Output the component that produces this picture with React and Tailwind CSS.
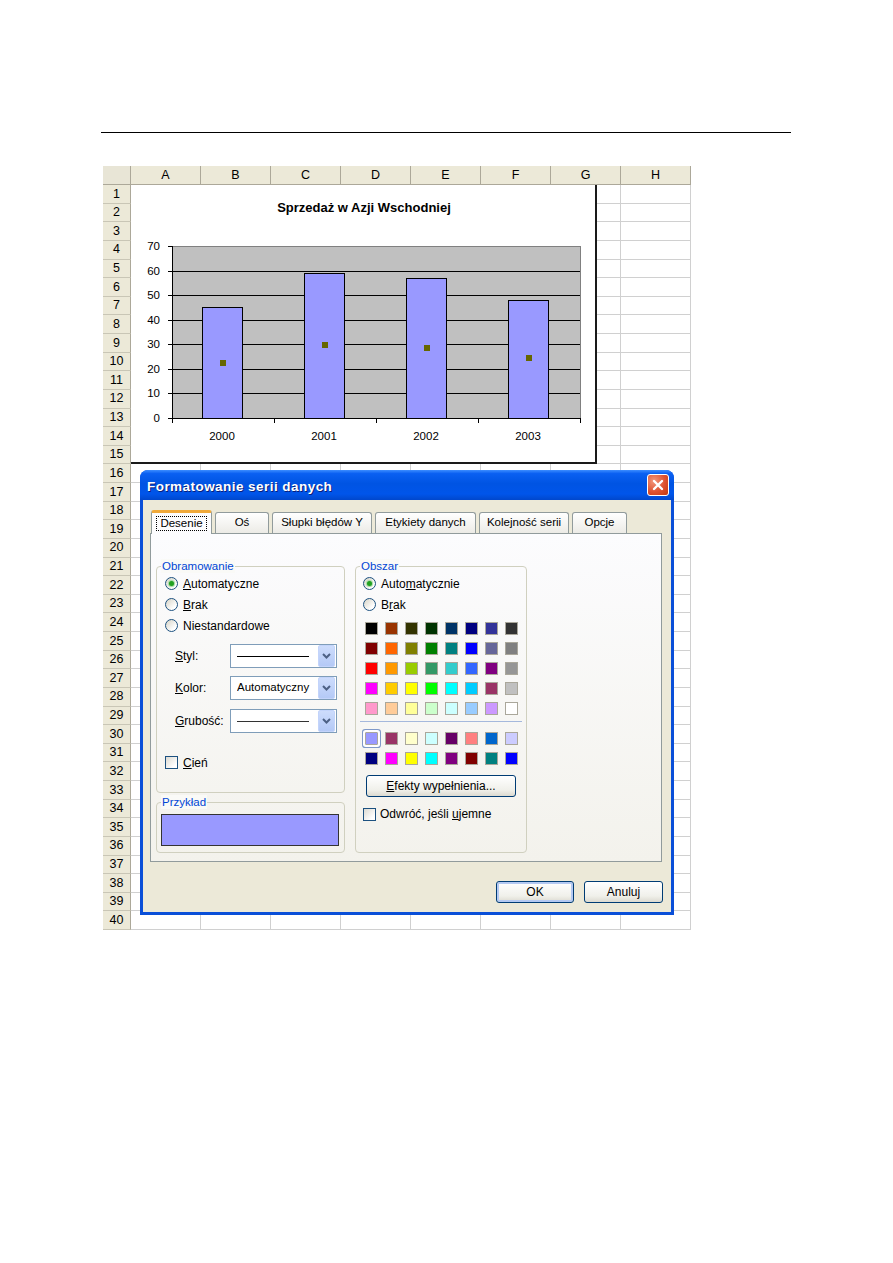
import React from 'react';

const COLS = ['A', 'B', 'C', 'D', 'E', 'F', 'G', 'H'];
const PALETTE = [
  ['#000000', '#993300', '#333300', '#003300', '#003366', '#000080', '#333399', '#333333'],
  ['#800000', '#FF6600', '#808000', '#008000', '#008080', '#0000FF', '#666699', '#808080'],
  ['#FF0000', '#FF9900', '#99CC00', '#339966', '#33CCCC', '#3366FF', '#800080', '#969696'],
  ['#FF00FF', '#FFCC00', '#FFFF00', '#00FF00', '#00FFFF', '#00CCFF', '#993366', '#C0C0C0'],
  ['#FF99CC', '#FFCC99', '#FFFF99', '#CCFFCC', '#CCFFFF', '#99CCFF', '#CC99FF', '#FFFFFF'],
];
const EXTRA = [
  ['#9999FF', '#993366', '#FFFFCC', '#CCFFFF', '#660066', '#FF8080', '#0066CC', '#CCCCFF'],
  ['#000080', '#FF00FF', '#FFFF00', '#00FFFF', '#800080', '#800000', '#008080', '#0000FF'],
];

function Chart() {
  const L = 41, R = 449, T = 61, B = 233;
  const u = (B - T) / 70;
  const vals = [45, 59, 57, 48];
  const marks = [22.5, 29.6, 28.6, 24.4];
  const years = ['2000', '2001', '2002', '2003'];
  const y = (v) => Math.round(B - v * u) + 0.5;
  const font = 'Liberation Sans, Arial, sans-serif';
  return (
    <svg width="464" height="277" className="block" shapeRendering="crispEdges">
      <text x="233" y="27" textAnchor="middle" fontSize="13" fontWeight="bold" fontFamily={font} fill="#000">
        Sprzedaż w Azji Wschodniej
      </text>
      <rect x={L + 0.5} y={T + 0.5} width={R - L} height={B - T} fill="#c0c0c0" stroke="#808080" />
      {[10, 20, 30, 40, 50, 60].map((v) => (
        <line key={v} x1={L} x2={R} y1={y(v)} y2={y(v)} stroke="#000" />
      ))}
      {vals.map((v, i) => {
        const x = L + i * 102 + 30;
        return (
          <rect key={i} x={x + 0.5} y={y(v)} width={40} height={B - y(v) + 0.5} fill="#9999ff" stroke="#000" />
        );
      })}
      {marks.map((v, i) => {
        const cx = L + i * 102 + 51;
        return <rect key={i} x={cx - 3} y={Math.round(B - v * u) - 3} width="6" height="6" fill="#666600" />;
      })}
      <line x1={L + 0.5} x2={L + 0.5} y1={T} y2={B + 1} stroke="#000" />
      <line x1={L} x2={R + 1} y1={B + 0.5} y2={B + 0.5} stroke="#000" />
      {[0, 10, 20, 30, 40, 50, 60, 70].map((v) => (
        <g key={v}>
          <line x1={L - 4} x2={L} y1={y(v)} y2={y(v)} stroke="#000" />
          <text x="29" y={Math.round(B - v * u) + 4} textAnchor="end" fontSize="11.5" fontFamily={font} fill="#000">
            {v}
          </text>
        </g>
      ))}
      {[0, 1, 2, 3, 4].map((i) => (
        <line key={i} x1={L + i * 102 + 0.5} x2={L + i * 102 + 0.5} y1={B} y2={B + 5} stroke="#000" />
      ))}
      {years.map((t, i) => (
        <text key={t} x={L + i * 102 + 50} y="255" textAnchor="middle" fontSize="11.5" fontFamily={font} fill="#000">
          {t}
        </text>
      ))}
    </svg>
  );
}

function Radio({ checked }) {
  return (
    <span className="w-[13px] h-[13px] rounded-full border border-[#1c5180] bg-[linear-gradient(135deg,#d6d3c6,#ffffff_75%)] flex items-center justify-center shrink-0">
      {checked && <span className="w-[5px] h-[5px] rounded-full bg-[#21a121] shadow-[0_0_1px_1px_#9fd89f]" />}
    </span>
  );
}

function Check() {
  return (
    <span className="w-[13px] h-[13px] border border-[#1c5180] bg-[linear-gradient(135deg,#dcdad2,#ffffff_80%)] shrink-0" />
  );
}

function Combo({ children }) {
  return (
    <div className="w-[107px] h-[24px] border border-[#7f9db9] bg-white flex items-center pl-[6px] pr-px">
      <div className="flex-1 flex items-center whitespace-nowrap overflow-hidden">{children}</div>
      <div className="w-[17px] h-[22px] shrink-0 rounded-[2px] bg-[linear-gradient(to_bottom,#cddcfc,#b4c9f6)] border border-[#c3d4fb] flex items-center justify-center">
        <svg width="9" height="6" viewBox="0 0 9 6">
          <path d="M1 1 L4.5 4.5 L8 1" stroke="#4d6185" strokeWidth="2" fill="none" />
        </svg>
      </div>
    </div>
  );
}

function Group({ label, className, children }) {
  return (
    <div className={`relative border border-[#d0d0bf] rounded-[4px] ${className}`}>
      <span className="absolute -top-[8px] left-[4px] px-px bg-[#fafaf7] text-[#0046d5] text-[11.5px] leading-[14px]">
        {label}
      </span>
      {children}
    </div>
  );
}

function Tab({ label, w }) {
  return (
    <div
      className={`${w} h-[21px] rounded-t-[3px] border border-b-0 border-[#919b9c] bg-[linear-gradient(to_bottom,#ffffff,#ecebe6)] flex items-center justify-center text-[11.5px]`}
    >
      {label}
    </div>
  );
}

function XPButton({ children, focus, w }) {
  return (
    <div
      className={`${w} h-[22px] rounded-[3px] border border-[#003c74] bg-[linear-gradient(to_bottom,#ffffff,#f0f0ea_70%,#dcdad0)] flex items-center justify-center ${
        focus ? 'shadow-[inset_0_0_0_2px_#b4c9f2]' : ''
      }`}
    >
      {children}
    </div>
  );
}

function Dialog() {
  return (
    <div className="absolute left-[37px] top-[304px] w-[534px] h-[445px] rounded-t-[8px] bg-[#0a4fd8] flex flex-col">
      <div className="h-[30px] rounded-t-[8px] bg-[linear-gradient(to_bottom,#3c8dff_0%,#0a60f2_12%,#0054e3_45%,#0055ea_80%,#0047cc_100%)] flex items-center justify-between pl-[7px] pr-[5px]">
        <span className="pt-[5px] text-white font-bold text-[13.5px] [text-shadow:1px_1px_0_#0a1f7a] tracking-[0.45px]">
          Formatowanie serii danych
        </span>
        <div className="w-[22px] h-[22px] rounded-[3px] border border-white bg-[radial-gradient(circle_at_30%_30%,#f3977c,#dd5230_55%,#c2380f)] flex items-center justify-center">
          <svg width="12" height="12" viewBox="0 0 12 12">
            <path d="M2 2 L10 10 M10 2 L2 10" stroke="#fff" strokeWidth="2.4" strokeLinecap="round" />
          </svg>
        </div>
      </div>
      <div className="flex-1 mx-[3px] mb-[3px] bg-[#ece9d8] pl-[7px] pt-[10px] flex flex-col text-[12px] text-black">
        <div className="flex items-end gap-[3px] pl-px h-[23px]">
          <div className="relative z-10 -mb-px w-[61px] h-[24px] rounded-t-[3px] border border-b-0 border-[#919b9c] border-t-[3px] border-t-[#f0a93a] bg-[#fcfcfe] flex items-center justify-center text-[11.5px]">
            <span className="border border-dotted border-black px-[3px] leading-[13px]">Desenie</span>
          </div>
          <Tab label="Oś" w="w-[54px]" />
          <Tab label="Słupki błędów Y" w="w-[100px]" />
          <Tab label="Etykiety danych" w="w-[101px]" />
          <Tab label="Kolejność serii" w="w-[90px]" />
          <Tab label="Opcje" w="w-[55px]" />
        </div>
        <div className="w-[512px] h-[329px] border border-[#919b9c] bg-[linear-gradient(to_bottom,#fcfcfe,#f3f2ec)] flex pl-[5px] pt-[32px] gap-[10px]">
          <div className="w-[189px] flex flex-col">
            <Group label="Obramowanie" className="h-[227px] pt-[6px] pl-[8px]">
              <div className="flex flex-col">
                <div className="h-[21px] flex items-center gap-[5px]">
                  <Radio checked />
                  <span>
                    <u className="underline">A</u>utomatyczne
                  </span>
                </div>
                <div className="h-[21px] flex items-center gap-[5px]">
                  <Radio />
                  <span>
                    <u className="underline">B</u>rak
                  </span>
                </div>
                <div className="h-[21px] flex items-center gap-[5px]">
                  <Radio />
                  <span>Niestandardowe</span>
                </div>
              </div>
              <div className="flex flex-col pl-[10px] mt-[8px] gap-[8px]">
                <div className="flex items-center">
                  <span className="w-[55px]">
                    <u className="underline">S</u>tyl:
                  </span>
                  <Combo>
                    <div className="w-[72px] h-px bg-black" />
                  </Combo>
                </div>
                <div className="flex items-center">
                  <span className="w-[55px]">
                    <u className="underline">K</u>olor:
                  </span>
                  <Combo>
                    <span className="text-[11.5px]">Automatyczny</span>
                  </Combo>
                </div>
                <div className="flex items-center mt-px">
                  <span className="w-[55px]">
                    <u className="underline">G</u>rubość:
                  </span>
                  <Combo>
                    <div className="w-[72px] h-px bg-[#333]" />
                  </Combo>
                </div>
              </div>
              <div className="h-[21px] flex items-center gap-[5px] mt-[19px]">
                <Check />
                <span>
                  <u className="underline">C</u>ień
                </span>
              </div>
            </Group>
            <Group label="Przykład" className="h-[51px] mt-[9px] pl-[4px] pt-[11px]">
              <div className="w-[178px] h-[32px] bg-[#9999ff] border border-[#333]" />
            </Group>
          </div>
          <Group label="Obszar" className="w-[172px] h-[287px] pt-[6px]">
            <div className="pl-[7px] flex flex-col">
              <div className="h-[21px] flex items-center gap-[5px]">
                <Radio checked />
                <span>
                  Auto<u className="underline">m</u>atycznie
                </span>
              </div>
              <div className="h-[21px] flex items-center gap-[5px]">
                <Radio />
                <span>
                  B<u className="underline">r</u>ak
                </span>
              </div>
            </div>
            <div className="pl-[9px] mt-[7px] grid grid-cols-[repeat(8,13px)] gap-x-[7px] gap-y-[7px]">
              {PALETTE.flat().map((c, i) => (
                <div key={i} className="w-[13px] h-[13px] border border-[#aaa79b]" style={{ backgroundColor: c }} />
              ))}
            </div>
            <div className="ml-[4px] w-[162px] h-px bg-[#a5b8dc] mt-[6px]" />
            <div className="pl-[9px] mt-[10px] grid grid-cols-[repeat(8,13px)] gap-x-[7px] gap-y-[7px]">
              {EXTRA.flat().map((c, i) => (
                <div
                  key={i}
                  className={`w-[13px] h-[13px] border border-[#aaa79b] ${
                    i === 0 ? 'rounded-[1px] shadow-[0_0_0_2px_#ffffff,0_0_0_3px_#7f99c9]' : ''
                  }`}
                  style={{ backgroundColor: c }}
                />
              ))}
            </div>
            <div className="ml-[10px] mt-[10px]">
              <XPButton w="w-[150px]">
                <span>
                  <u className="underline">E</u>fekty wypełnienia...
                </span>
              </XPButton>
            </div>
            <div className="ml-[7px] mt-[7px] h-[20px] flex items-center gap-[4px]">
              <Check />
              <span>
                Odwróć, jeśli <u className="underline">u</u>jemne
              </span>
            </div>
          </Group>
        </div>
        <div className="flex justify-end gap-[10px] pr-[8px] mt-[19px]">
          <XPButton focus w="w-[78px]">
            OK
          </XPButton>
          <XPButton w="w-[79px]">Anuluj</XPButton>
        </div>
      </div>
    </div>
  );
}

function Sheet() {
  const rows = Array.from({ length: 40 }, (_, i) => i + 1);
  return (
    <div className="relative w-[589px] ml-[103px] mt-[33px]">
      <div className="grid grid-cols-[28px_repeat(8,70px)] text-[12.5px] text-black">
        <div className="h-[19px] bg-[#e8e5d6] border-r border-b border-[#aca899]" />
        {COLS.map((c) => (
          <div
            key={c}
            className="h-[19px] bg-[#ece9d8] border-r border-b border-[#aca899] flex items-center justify-center"
          >
            {c}
          </div>
        ))}
        {rows.map((r) => (
          <React.Fragment key={r}>
            <div className="h-[18.625px] bg-[#ece9d8] border-r border-b border-r-[#aca899] border-b-[#c9c6b6] flex items-center justify-center leading-none">
              {r}
            </div>
            {COLS.map((c) => (
              <div key={c} className="h-[18.625px] bg-white border-r border-b border-[#d0d0d0]" />
            ))}
          </React.Fragment>
        ))}
      </div>
      <div className="absolute left-[28px] top-[19px] w-[466px] h-[279px] bg-white border-r-2 border-b-2 border-[#1a1a1a]">
        <Chart />
      </div>
      <Dialog />
    </div>
  );
}

export default function App() {
  return (
    <div className="w-[893px] h-[1263px] bg-white font-['Liberation_Sans',Arial,sans-serif] overflow-hidden">
      <div className="pt-[132px] pl-[101px]">
        <div className="w-[690px] h-px bg-black" />
      </div>
      <Sheet />
    </div>
  );
}
